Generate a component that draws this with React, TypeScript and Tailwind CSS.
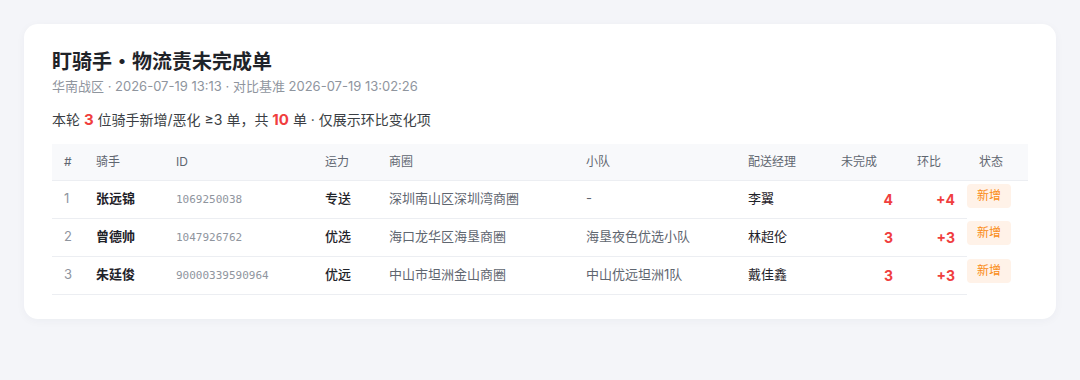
const rows = [
  { no: 1, name: "张远锦", id: "1069250038", cap: "专送", area: "深圳南山区深圳湾商圈", team: "-", mgr: "李翼", open: 4, delta: "+4" },
  { no: 2, name: "曾德帅", id: "1047926762", cap: "优选", area: "海口龙华区海垦商圈", team: "海垦夜色优选小队", mgr: "林超伦", open: 3, delta: "+3" },
  { no: 3, name: "朱廷俊", id: "90000339590964", cap: "优远", area: "中山市坦洲金山商圈", team: "中山优远坦洲1队", mgr: "戴佳鑫", open: 3, delta: "+3" },
];

const heads = ["#", "骑手", "ID", "运力", "商圈", "小队", "配送经理", "未完成", "环比", "状态"];

const App = () => {
  return (
    <div className="min-h-[380px] bg-[#f4f5f9] p-6 font-['Inter','Noto_Sans_CJK_SC',sans-serif]">
      <div className="rounded-[14px] bg-white px-7 pt-6 pb-6 shadow-[0_2px_10px_rgba(30,40,80,0.04)]">
        <h1 className="text-[20px] font-bold leading-[28px] text-[#1f2329]">盯骑手・物流责未完成单</h1>
        <p className="text-[13px] leading-[20px] text-[#8f959e]">
          华南战区 · 2026-07-19 13:13 · 对比基准 2026-07-19 13:02:26
        </p>
        <p className="mt-[14px] text-[14px] leading-[20px] text-[#3b3f45]">
          本轮 <span className="text-[15px] font-bold text-[#f03e3e]">3</span> 位骑手新增/恶化 ≥3 单，共{" "}
          <span className="text-[15px] font-bold text-[#f03e3e]">10</span> 单 · 仅展示环比变化项
        </p>

        {/* rider table */}
        <table className="mt-[14px] w-full table-fixed border-collapse text-left">
          <colgroup>
            <col className="w-[32px]" />
            <col className="w-[80px]" />
            <col className="w-[149px]" />
            <col className="w-[64px]" />
            <col className="w-[197px]" />
            <col className="w-[162px]" />
            <col className="w-[93px]" />
            <col className="w-[76px]" />
            <col className="w-[62px]" />
            <col className="w-[61px]" />
          </colgroup>
          <thead>
            <tr className="h-[36px] border-b border-[#eceef2] bg-[#f8f9fb]">
              {heads.map((h) => (
                <th key={h} className="px-3 text-[12px] font-normal text-[#5f6670]">
                  {h}
                </th>
              ))}
            </tr>
          </thead>
          <tbody>
            {rows.map((r) => (
              <tr key={r.no} className="h-[38px]">
                <td className="border-b border-[#eceef2] px-3 text-[13px] text-[#8f959e]">{r.no}</td>
                <td className="border-b border-[#eceef2] px-3 text-[13px] font-bold text-[#1f2329]">{r.name}</td>
                <td className="border-b border-[#eceef2] px-3 pt-[2px] font-['DejaVu_Sans_Mono',monospace] text-[11px] text-[#8f959e]">
                  {r.id}
                </td>
                <td className="border-b border-[#eceef2] px-3 text-[13px] font-medium text-[#1f2329]">{r.cap}</td>
                <td className="border-b border-[#eceef2] px-3 text-[13px] text-[#5f6670]">{r.area}</td>
                <td className="border-b border-[#eceef2] px-3 text-[13px] text-[#5f6670]">{r.team}</td>
                <td className="border-b border-[#eceef2] px-3 text-[13px] text-[#1f2329]">{r.mgr}</td>
                <td className="border-b border-[#eceef2] px-3 text-right text-[14px] font-bold text-[#f03e3e]">{r.open}</td>
                <td className="border-b border-[#eceef2] px-3 text-right text-[14px] font-bold text-[#f03e3e]">{r.delta}</td>
                <td className="p-0 pt-[1px] align-top">
                  <span className="inline-block rounded-[4px] bg-[#fff2e8] px-[10px] py-[3px] text-[12px] leading-[18px] text-[#fa8c16]">
                    新增
                  </span>
                </td>
              </tr>
            ))}
          </tbody>
        </table>
      </div>
    </div>
  );
};

export default App;
